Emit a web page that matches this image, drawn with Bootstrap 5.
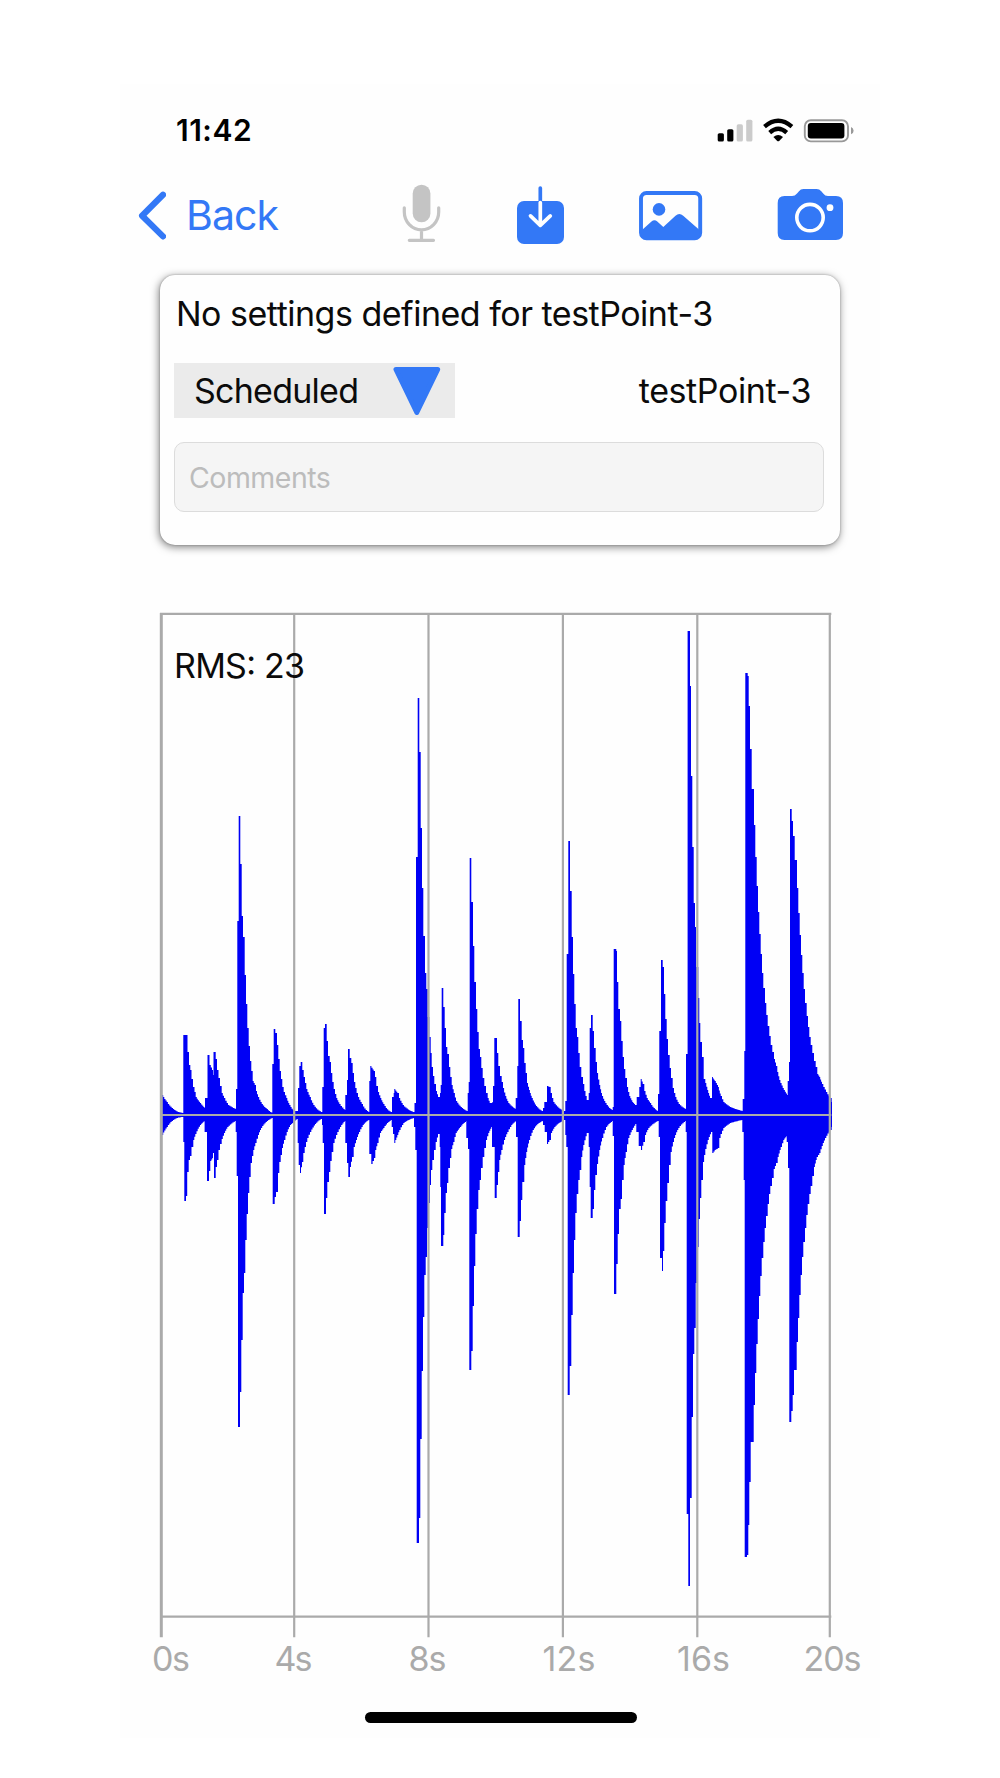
<!DOCTYPE html>
<html lang="en">
<head>
<meta charset="utf-8">
<title>testPoint-3</title>
<meta name="viewport" content="width=device-width, initial-scale=1">
<link href="https://cdn.jsdelivr.net/npm/bootstrap@5.3.0/dist/css/bootstrap.min.css" rel="stylesheet">
<style>
body{font-family:Inter,"Liberation Sans",sans-serif;background:#fff;color:#0b0b0b;overflow:hidden}
.phone{width:760px;height:1654px;margin:84px 0 0 120px;background:#fefefe}
.statusbar{height:94px;padding:0 24px 0 56px}
.clock{font-size:30px;font-weight:600;line-height:40px;letter-spacing:.5px;color:#000;margin-top:26px}
.signals{margin-top:34px}
.toolbar{height:97px;padding:6px 0 0 18px}
.toolbar svg{display:block;flex:none}
.backlink{color:#3378f6;font-size:41px;line-height:50px;letter-spacing:-.9px;text-decoration:none;width:263px;padding-top:6px}
.backlink span{margin-left:20px}
.settings{width:680px;height:270px;margin-left:40px;padding:14px 16px 0 14px;border:0;border-radius:15px;background:#fefefe;box-shadow:-1px 2px 8px rgba(0,0,0,.5),0 0 2px rgba(0,0,0,.3)}
.headline,.value{font-size:34px;line-height:50px;white-space:nowrap}
.headline{margin-left:2px;letter-spacing:-.5px}
.picker{width:281px;height:55px;background:#ebebeb;border:0;border-radius:0;padding:0 13px 0 20px;color:#0b0b0b}
.value{letter-spacing:-.4px}
.picker .value{letter-spacing:-.75px}
.point{margin-right:13px}
.pickrow{margin-top:24px}
.comments{height:70px;margin-top:24px;border:1.5px solid #dcdcdc;border-radius:10px;background:#f5f5f5;font-size:28.5px;padding:0 14px;letter-spacing:-.5px}
.comments::placeholder{color:#bcbcbc;opacity:1}
.chart{display:block;margin:55px 0 0 30px}
.homebar{width:272px;height:11px;border-radius:6px;background:#000;margin:22px 0 0 245px}
</style>
</head>
<body>
<main class="phone">
  <div class="statusbar d-flex justify-content-between align-items-start">
    <div class="clock">11:42</div>
    <svg class="signals" width="140" height="26" viewBox="716 118 140 26" aria-label="Signal, Wi-Fi, battery">
      <rect x="717.7" y="133.2" width="6.2" height="8.4" rx="1.6"/>
      <rect x="727.2" y="129.2" width="6.2" height="12.4" rx="1.6"/>
      <g fill="#cbcbcb"><rect x="736.7" y="124.3" width="6.2" height="17.3" rx="1.6"/><rect x="746.2" y="119.7" width="6.2" height="21.9" rx="1.6"/></g>
      <g fill="none" stroke="#000" stroke-width="4.2"><path d="M764.5 126.6Q778.200 114.800 791.900 126.600"/><path d="M769.700 132.600Q778.200 124.800 786.700 132.600"/></g>
      <path d="M773.400 136.900Q778.200 132.900 783 136.900L779.200 140.900Q778.200 141.800 777.200 140.900Z"/>
      <rect x="804.800" y="120.200" width="43.200" height="21.200" rx="6" fill="none" stroke="#999" stroke-width="1.900"/>
      <rect x="807.800" y="123" width="36.600" height="15.400" rx="3"/>
      <path d="M851 127Q853.600 128 853.600 130.700T851 134.300Z" fill="#999"/>
    </svg>
  </div>
  <nav class="toolbar d-flex align-items-start" aria-label="Tools">
    <a class="backlink d-flex align-items-center" href="#">
      <svg width="28" height="50" viewBox="138 190 28 50"><path d="M163 194.800L142.100 215.700L163 236.400" fill="none" stroke="#3378f6" stroke-width="6.200" stroke-linecap="round" stroke-linejoin="round"/></svg><span>Back</span>
    </a>
    <svg width="449" height="62" viewBox="401 184 449 62">
      <g fill="none" stroke="#c4c4c4" stroke-width="3.200" stroke-linecap="round">
        <rect x="412.700" y="184.700" width="17.700" height="37.600" rx="8.800" fill="#c4c4c4" stroke="none"/>
        <path d="M404.300 207.800V212A17.200 17.800 0 0 0 438.700 212V207.800M421.500 230V240M409.300 240.300H433.500"/>
      </g>
      <g fill="none" stroke-width="3.700" stroke-linecap="round" stroke-linejoin="round">
        <rect x="517" y="201" width="47" height="43" rx="7" fill="#3378f6"/>
        <path d="M540.300 188V201" stroke="#3378f6"/><path d="M540.300 202.500V225M530.500 215.900L540.300 225.300L550.300 215.900" stroke="#fff"/>
      </g>
      <rect x="641" y="193" width="59.200" height="45.200" rx="5.500" fill="none" stroke="#3378f6" stroke-width="3.900"/>
      <path d="M642 230L651.500 221.500Q654.500 219 657.300 221.500L663.300 227L675.500 215.700Q679.300 212.500 683.200 215.700L699.500 230V238H642Z" fill="#3378f6"/>
      <circle cx="659" cy="209.400" r="6.300" fill="#3378f6"/>
      <path d="M784.500 196H792Q795 196 797 193.500L799 191.200Q800.500 189 803.500 189H816.500Q819.500 189 821.300 191.200L823.200 193.500Q825 196 828 196H836Q843 196 843 203V233Q843 240 836 240H784.500Q777.700 240 777.700 233V203Q777.700 196 784.500 196Z" fill="#3378f6"/>
      <circle cx="810" cy="217.600" r="13.200" fill="none" stroke="#fff" stroke-width="3.600"/><circle cx="830" cy="207.700" r="3.400" fill="#fff"/>
    </svg>
  </nav>
  <section class="card settings">
    <div class="headline">No settings defined for testPoint-3</div>
    <div class="pickrow d-flex justify-content-between align-items-center">
      <button class="picker d-flex justify-content-between align-items-center" type="button"><span class="value">Scheduled</span>
        <svg width="50" height="50" viewBox="393 365 50 50"><path d="M397 368.500H438.700L417.800 411.500Z" fill="#3378f6" stroke="#3378f6" stroke-width="5" stroke-linejoin="round"/></svg>
      </button>
      <span class="value point">testPoint-3</span>
    </div>
    <input class="form-control comments" placeholder="Comments" aria-label="Comments">
  </section>
  <svg class="chart" width="730" height="1090" viewBox="150 600 730 1090" font-family="Inter, 'Liberation Sans', sans-serif" font-size="34">
    <path id="wave" fill="#0000f5"/>
    <g stroke="#aaa" stroke-width="2.200">
      <path d="M161.300 613V1637.300" stroke-width="3"/>
      <path d="M294.200 613V1637.300M428.500 613V1637.300M562.900 613V1637.300M697.300 613V1637.300M829.800 613V1637.300"/>
      <path d="M160 613.800H831.300M160 1115H831.300M160 1616.700H831.300"/>
    </g>
    <text x="174" y="677.500" textLength="131" fill="#0b0b0b">RMS: 23</text>
    <g fill="#aaa">
      <text x="152" y="1670.500" textLength="38">0s</text><text x="274.500" y="1670.500" textLength="38">4s</text>
      <text x="408.500" y="1670.500" textLength="38">8s</text><text x="542.500" y="1670.500" textLength="53">12s</text>
      <text x="677" y="1670.500" textLength="53">16s</text><text x="803.500" y="1670.500" textLength="58">20s</text>
    </g>
  </svg>
  <div class="homebar"></div>
</main>
<script>
// Peak amplitudes above and below the zero line, as "x amplitude" pairs
const upper = `162 20 166.7 13 171.7 7 178 3 182.5 2 183.3 80 187.5 63 189 50 190.3 45 191.5 36 193 28 194.5 23 195.7 18 200 12 204.5 7 205 17 207.5 60 209.5 50 212 45 213 40 213.5 63 215.7 56 217 45 218.5 37 220 29 221.7 22 224 17 228 10 235.5 6
236 26 237.3 194 238.7 299 240.3 251 241.7 199 243 178 244.7 140 246 111 247.3 87 248.7 69 250 54 251.3 44 252.7 34 254.7 30 256 24 258 18 261.7 11 266.7 6 271.3 2.5
272.3 51 273.7 86 275.3 82 277 70 278.3 56 279.7 44 281 36 282.3 28 283.7 23 286.3 17 289.3 10 294 4 297 4 298 27 299.3 49 300.7 53 302.3 45 303.7 38 305 32 306.3 26 309.7 18 313.3 10 321 3
322.3 28 323.7 87 325 91 326.7 74 328 59 329.7 53 331 42 332.3 33 333.7 26 336.3 17 339.3 11 344.7 5 345.3 20 347 35 348 66 349.7 57 351.3 52 352.7 42 354 33 355.3 27 358 18 361.7 11 368.3 3
369.3 34 370.3 49 373.7 44 375 38 376.3 29 378 23 380.3 17 383.3 11 390.7 3 392 18 393.7 22 394.3 26 397.3 22 399 17 402.7 10 413 3
414.5 12 416 258 417.7 417 419.3 363 420.7 287 422 227 423.3 179 425 142 426.3 126 427.7 98 429.3 78 430.7 62 431.7 48 433 39 434.3 31 436 24 438 18 440 22 440.7 30 441.7 127 443.3 108 444.7 87 446 68 447.3 61 449 48 450.3 38 451.7 30 453.7 22 456 14 460.7 8 466.7 4
467.7 22 468.7 33 469.7 257 471.3 213 473 169 474.3 133 476 106 477.3 83 478.7 66 480 58 481.3 47 482.7 37 484.3 29 486 22 487.7 17 489.7 12 492.3 13 493 29 494.3 77 497 62 498.3 49 500 39 501.7 33 503 27 505.3 19 508.3 12 515.3 6
515.7 17 517.3 49 518.3 116 520 94 521.7 75 523 67 524.3 52 525.7 42 527 32 529 25 531.7 17 536 9 541.7 4 543 7 544.3 13 547 29 549.3 28 550.7 22 553.3 13 563.3 4
565.3 14 566.7 161 568.3 274 570 224 571.7 178 573 141 574.3 111 575.7 87 577 78 578.3 62 579.7 48 581.3 38 583 31 584.3 24 586.7 15 588.7 22 589.7 87 591 100 592.7 84 594 67 595.7 53 597 42 599.3 30 602 19 605.3 12 611.7 5
612.7 8 613.7 166 616.3 164 617 133 618.3 106 620 94 621.3 74 622.7 58 624 46 625.3 37 627 28 629.3 19 632.3 13 635 10 636.7 18 639.3 28 640.7 36 642.7 31 644.3 24 646.7 17 650 12 657.3 4
658 21 659.3 84 661 155 662.7 148 664 121 665.3 96 666.7 76 668 60 669.7 47 671 37 672.7 27 675.3 18 678.7 11 685.3 6 686 61 687.6 484 690 429 691 339 692.3 268 693.7 212 695 188 696 148 698.3 117 699.3 92 700.3 73 702 58 703.7 36 705.3 32 707.3 25 710 17
712 38 714.7 34 718 28 720.7 19 723.3 13 730 8 742.3 4 742.7 16 744.3 64 745.3 442 747.7 439 748.7 409 750 366 751.7 326 754 290 755.3 258 756.7 229 758 203 759.3 181 760.7 161 762 142 763.3 127 765 112 766.3 100 767.7 89 769.3 79 770.7 70 772.3 63 774 56 776 49 777.3 43 779.3 35 782.7 27 787 20
787.7 34 789 53 790 306 791.7 294 793 279 794.7 255 797 227 798.3 202 799.7 180 801 160 802.3 142 803.7 126 805 112 806.7 99 808 88 809.3 78 810.7 70 812.3 62 814 54 815.7 48 817.3 41 819.3 38 822 31 826 23 830 17 831.7 13`;
const lower = `162 20 166.7 12 171.7 6 178 2.5 182.3 2 183.3 27 184.3 86 186 81 187.2 57 188.7 45 190 41 191.5 32 193.3 25 195.3 19 200 10 204.3 6 204.6 17 207 66 209 56 210.3 46 212.3 43 213 38 214 63 215.7 52 217 45 218.5 35 220 29 221.7 24 224 18 227.3 12 235 6
235.7 17 236.7 61 238 312 240 277 241.3 225 242.7 178 244 158 245.3 125 246.7 99 248 78 249.3 62 250.7 48 252 41 253.3 35 255.3 28 258 20 261 13 265.7 7 271.8 3
272.7 89 274.7 82 276 77 278 58 279.3 47 280.7 40 282 33 284 25 286.7 17 290 10 293.3 7 296.7 4 297.7 28 298.7 50 300 58 302 47 303.3 38 304.7 32 307.3 23 310 17 315 9 320.7 4
322 10 322.7 28 324 99 326 83 327.3 67 329 57 330.3 46 331.7 37 333.3 28 336 20 340 12 344.7 6 345.3 28 347 48 348.3 62 350 52 352 42 353.7 32 356 25 359 17 362.7 10 368.3 5
369.3 39 371.3 49 374 43 375.3 35 377.3 28 380 18 383.3 13 390.7 5 391.7 12 393 19 394.3 28 397.3 20 399.3 15 403.3 8 413.3 3
414 12 415.3 35 416.7 428 419 403 420.3 324 421.7 256 423 202 424.3 160 425.7 142 427 113 428.7 88 430 70 431 55 432.3 45 434 35 435.7 27 438 19 439.7 32 440.3 72 441 131 443.3 120 444.3 98 445.7 78 447 68 448.3 53 450 43 451.3 34 453.3 27 455.7 18 460 12 466 6
466.3 23 468 34 469.3 255 471.3 236 472.7 191 474 151 475.3 119 476.7 94 478.3 75 479.7 65 481 53 482.7 42 484.3 33 486 25 488.3 18 491.3 12 492 32 494.7 83 496.7 70 498 57 499.3 45 501.3 35 504 25 507.3 17 511.3 10 515.7 6
516 22 517.7 122 519.7 106 521 85 522.3 67 524.3 50 526.3 37 529 25 532.7 15 537.3 9 542.3 6 543 10 544.7 17 547 29 549.3 25 551 18 554.3 12 564 5
565.3 20 566.3 32 567.7 280 569.7 251 571.3 200 572.7 158 574 125 575.3 98 576.7 79 578.3 65 579.7 55 581.3 42 583.3 30 586.7 18 588.7 32 589.7 72 590.7 103 592.7 94 594 75 595.3 60 597 49 599.3 35 602 23 606 12 612 6
612.7 21 614 179 616.3 149 617.7 119 619 94 620.7 84 622 65 623.7 50 625.7 37 628.3 23 631.7 15 635.3 9 636.3 17 638.7 31 641 35 643.3 27 645 20 648.3 13 657.3 6
658.7 22 660 143 662 156 663 136 664.3 108 665.7 86 667.3 68 669 50 670.7 37 674 23 678.3 13 685 6 685.7 17 686.7 399 688.3 471 690 383 691.7 302 693 239 694.3 213 695.7 168 697.3 132 698.7 104 700 83 701.3 65 703 47 705.3 34 707.7 25 711 17
712.3 38 714.7 35 718 33 719.3 23 723.3 13 730 8 741.7 5 742.3 17 743.7 65 744.7 442 747 440 748.3 410 749.3 367 750.7 327 753.7 290 755 258 756.3 229 757.7 204 759 181 760.3 161 761.7 143 763.3 127 764.7 113 766 101 767.7 89 769 79 770.3 71 772 63 773.7 54 776 48 777.7 42 780.7 32 783.3 25 786.3 21
786.7 27 788 53 789.3 307 791.3 296 792.7 280 794 255 796.7 227 798 203 799.3 180 800.7 160 802 142 803.3 127 805 113 806.3 100 807.7 89 809.3 79 810.7 71 812.3 61 814 52 816.7 42 819.3 38 821.7 31 825 23 830 15 831.7 12`;
// Hold each sample until the next; long gaps in a decay are filled geometrically in sample-wide steps
function edge(text, sign){
  const n = text.trim().split(/\s+/).map(Number);
  let d = [];
  for(let i = 0; i < n.length; i += 2){
    const x = n[i], a = n[i+1], x2 = n[i+2] ?? 832, a2 = n[i+3] ?? a;
    const steps = x2 - x > 1.9 && a < 60 && a2 <= a ? Math.ceil((x2 - x) / 1.35) : 1;
    for(let k = 0; k < steps; k++){
      const y = 1115 - sign * a * Math.pow(a2 / a, k / steps);
      const l = x + (x2 - x) * k / steps, r = x + (x2 - x) * (k + 1) / steps;
      d.push([l, y], [r, y]);
    }
  }
  return d;
}
const points = edge(upper, 1).concat(edge(lower, -1).reverse());
document.getElementById('wave').setAttribute('d', 'M' + points.map(p => p[0].toFixed(1) + ' ' + p[1].toFixed(1)).join('L') + 'Z');
</script>
<script src="https://cdn.jsdelivr.net/npm/bootstrap@5.3.0/dist/js/bootstrap.bundle.min.js"></script>
</body>
</html>
